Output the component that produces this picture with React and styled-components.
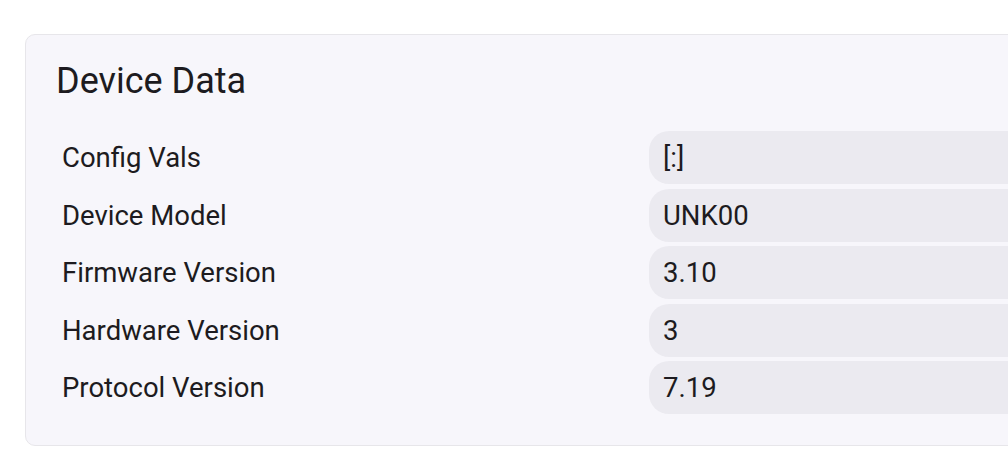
import React from 'react'
import styled, { createGlobalStyle } from 'styled-components'

const rows = [
    { label: 'Config Vals', value: '[:]' },
    { label: 'Device Model', value: 'UNK00' },
    { label: 'Firmware Version', value: '3.10' },
    { label: 'Hardware Version', value: '3' },
    { label: 'Protocol Version', value: '7.19' },
]

function App() {
    return (
        <>
            <Global />
            <Page>
                <Card>
                    <Title>Device Data</Title>
                    <Table>
                        {rows.map((r) => (
                            <React.Fragment key={r.label}>
                                <Label>{r.label}</Label>
                                <Value>{r.value}</Value>
                            </React.Fragment>
                        ))}
                    </Table>
                </Card>
            </Page>
        </>
    )
}

export default App

const Global = createGlobalStyle`
body {
    margin: 0;
    background: #fff;
    font-family: Roboto, "Noto Sans", sans-serif;
    color: #1d1b20;
    overflow: hidden;
}
`
const Page = styled.div`
padding: 34px 0 0 25px;
`
const Card = styled.div`
width: 1248px;
box-sizing: border-box;
background: #f7f6fb;
border: 1px solid #e7e6ea;
border-radius: 10px;
padding: 24px 30px 31px 30px;
`
const Title = styled.h2`
margin: 0 0 28px;
font-weight: 400;
font-size: 36px;
line-height: 44px;
`
const Table = styled.div`
display: grid;
grid-template-columns: 593px 1fr;
row-gap: 4.5px;
`
const Label = styled.div`
display: flex;
align-items: center;
padding-left: 6px;
font-size: 27.5px;
`
const Value = styled.div`
display: flex;
align-items: center;
height: 53px;
padding-left: 14px;
border-radius: 20px;
background: #ebeaf0;
font-size: 27.5px;
`
